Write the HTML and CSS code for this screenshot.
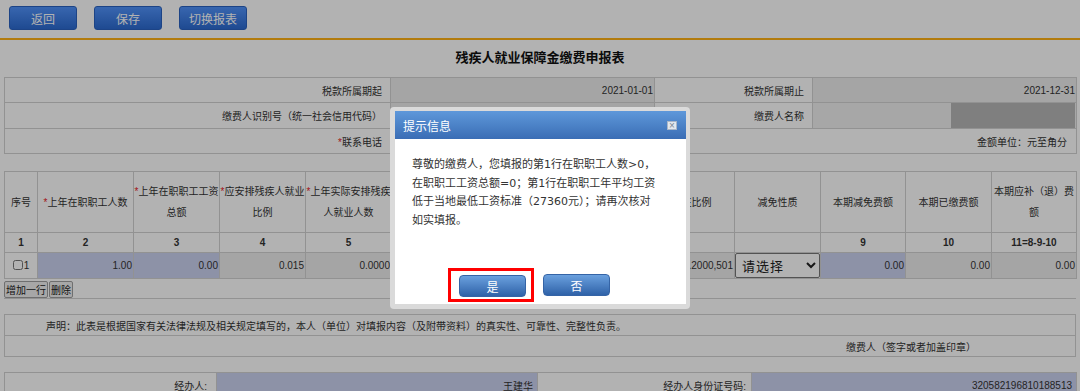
FILE: index.html
```html
<!DOCTYPE html>
<html lang="zh-CN">
<head>
    <meta charset="UTF-8">
    <title>残疾人就业保障金缴费申报表</title>
    <link rel="stylesheet" href="styles.css">
</head>
<body class="modal-open">

<div class="toolbar">
    <button class="tool-btn">返回</button>
    <button class="tool-btn">保存</button>
    <button class="tool-btn">切换报表</button>
</div>

<div class="form">
    <h1 class="title">残疾人就业保障金缴费申报表</h1>

    <table class="info">
        <colgroup>
            <col style="width:386px"><col style="width:264px"><col style="width:158px"><col style="width:264px">
        </colgroup>
        <tr>
            <td class="label">税款所属期起</td>
            <td class="value ro">2021-01-01</td>
            <td class="label">税款所属期止</td>
            <td class="value ro">2021-12-31</td>
        </tr>
        <tr>
            <td class="label">缴费人识别号（统一社会信用代码）</td>
            <td class="value ro"></td>
            <td class="label">缴费人名称</td>
            <td class="value name"><span class="mask"></span></td>
        </tr>
        <tr>
            <td class="label"><span class="req">*</span>联系电话</td>
            <td class="value in"></td>
            <td class="value unit" colspan="2">金额单位：元至角分</td>
        </tr>
    </table>

    <div class="detail">
        <table class="grid">
            <colgroup>
                <col style="width:33px"><col style="width:96px"><col style="width:86px"><col style="width:86px">
                <col style="width:86px"><col style="width:86px"><col style="width:86px"><col style="width:85px">
                <col style="width:86px"><col style="width:86px"><col style="width:85px"><col style="width:86px">
                <col style="width:85px">
            </colgroup>
            <tr class="head">
                <td>序号</td>
                <td><span class="req">*</span>上年在职职工人数</td>
                <td><span class="req">*</span>上年在职职工工资总额</td>
                <td><span class="req">*</span>应安排残疾人就业比例</td>
                <td><span class="req">*</span>上年实际安排残疾人就业人数</td>
                <td>上年在职职工年平均工资</td>
                <td>上年实际安排残疾人就业比例</td>
                <td>本期应纳费额</td>
                <td>减征比例</td>
                <td>减免性质</td>
                <td>本期减免费额</td>
                <td>本期已缴费额</td>
                <td>本期应补（退）费额</td>
            </tr>
            <tr class="nums">
                <td>1</td><td>2</td><td>3</td><td>4</td><td>5</td><td>6</td><td>7</td><td>8</td>
                <td></td><td></td><td>9</td><td>10</td><td>11=8-9-10</td>
            </tr>
            <tr class="data">
                <td class="seq"><input type="checkbox" class="chk">1</td>
                <td class="in">1.00</td>
                <td class="in">0.00</td>
                <td class="ro">0.015</td>
                <td class="ro">0.0000</td>
                <td class="ro">0.00</td>
                <td class="ro">0.0000</td>
                <td class="ro">0.00</td>
                <td class="ro clip">0.2000,501</td>
                <td class="sel">
                    <select class="picker">
                        <option>请选择</option>
                    </select>
                </td>
                <td class="in">0.00</td>
                <td class="ro">0.00</td>
                <td class="ro">0.00</td>
            </tr>
        </table>
        <div class="row-tools">
            <button class="small-btn">增加一行</button><button class="small-btn">删除</button>
        </div>
    </div>

    <table class="declare">
        <tr>
            <td class="stmt">声明：此表是根据国家有关法律法规及相关规定填写的，本人（单位）对填报内容（及附带资料）的真实性、可靠性、完整性负责。</td>
        </tr>
        <tr>
            <td class="sign">缴费人（签字或者加盖印章）</td>
        </tr>
    </table>

    <table class="agent">
        <colgroup>
            <col style="width:212px"><col style="width:321px"><col style="width:214px"><col style="width:325px">
        </colgroup>
        <tr>
            <td class="label">经办人:</td>
            <td class="value in">王建华</td>
            <td class="label tight">经办人身份证号码:</td>
            <td class="value in">320582196810188513</td>
        </tr>
    </table>
</div>

<div class="mask-layer">
    <div class="dialog">
        <div class="dialog-head">
            <span class="dialog-title">提示信息</span>
            <span class="dialog-close">×</span>
        </div>
        <div class="dialog-body">
            <p class="dialog-msg">尊敬的缴费人，您填报的第1行在职职工人数&gt;0，<br>在职职工工资总额=0；第1行在职职工年平均工资<br>低于当地最低工资标准（27360元）；请再次核对<br>如实填报。</p>
            <div class="dialog-btns">
                <span class="mark"><button class="dlg-btn">是</button></span>
                <button class="dlg-btn">否</button>
            </div>
        </div>
    </div>
</div>

</body>
</html>
```

FILE: styles.css
```css
body {
    margin: 0;
    font-family: "Liberation Sans", "Noto Sans CJK SC", sans-serif;
    font-size: 10px;
    color: #333;
    background: #fff;
}
.modal-open {
    overflow: hidden;
}
.toolbar {
    display: flex;
    gap: 17px;
    height: 40px;
    box-sizing: border-box;
    padding: 6px 0 0 9px;
    border-bottom: 2px solid #ffb014;
}
.tool-btn {
    width: 68px;
    height: 24px;
    padding: 0;
    font-family: "Noto Sans CJK SC", sans-serif;
    font-size: 12px;
    color: #fff;
    background: linear-gradient(#5193fb, #2c6ad0);
    border: 1px solid #2a62c0;
    border-radius: 3px;
}
.form {
    padding: 0 4px;
}
.title {
    margin: 0;
    padding: 7px 0 10px;
    font-family: "Noto Sans CJK SC", sans-serif;
    font-size: 13px;
    line-height: 20px;
    text-align: center;
    color: #111;
}
.req {
    color: #e8211e;
}
table {
    width: 100%;
    border-collapse: collapse;
    table-layout: fixed;
}
td {
    border: 1px solid #d2d2d2;
    padding: 0;
    white-space: nowrap;
    overflow: hidden;
}
.ro {
    background: #ededed;
}
.in {
    background: #cbd2f0;
}

/* header */
.info td {
    height: 24px;
    text-align: right;
}
.info .label {
    padding-right: 8px;
}
.info .value {
    padding-right: 1px;
}
.info .name {
    background: #f0f0f0;
}
.mask {
    display: block;
    width: 124px;
    height: 25px;
    margin-left: auto;
    background: #b7b7b7;
}
.info .unit {
    padding-right: 9px;
}

/* detail grid */
.detail {
    margin-top: 17px;
    border-bottom: 1px solid #d2d2d2;
}
.grid td {
    text-align: center;
}
.grid .head td {
    height: 60px;
    line-height: 21px;
    white-space: normal;
}
.grid .nums td {
    height: 19px;
    font-weight: bold;
}
.grid .data td {
    height: 25px;
    text-align: right;
    padding-right: 1px;
}
.grid .data .seq {
    text-align: center;
    padding: 0;
}
.chk {
    width: 10px;
    height: 10px;
    margin: 0 1px 0 0;
    vertical-align: -1px;
}
.grid .data .sel {
    padding: 0;
    background: #fff;
}
.picker {
    width: 100%;
    height: 25px;
    margin: 0;
    padding-left: 2px;
    font-family: "Noto Sans CJK SC", sans-serif;
    font-size: 13px;
    letter-spacing: 1px;
    color: #222;
    border: 1px solid #777;
    border-radius: 2px;
    background: #fff;
}
.row-tools {
    display: flex;
    height: 19px;
    padding-top: 2px;
    box-sizing: border-box;
}
.small-btn {
    height: 17px;
    padding: 0 1px;
    margin-right: 1px;
    font-family: "Noto Sans CJK SC", sans-serif;
    font-size: 10px;
    line-height: 15px;
    color: #222;
    background: #efefef;
    border: 1px solid #a0a0a0;
    border-radius: 2px;
}

/* declaration */
.declare {
    margin-top: 15px;
}
.declare td {
    height: 20px;
}
.declare .stmt {
    padding-left: 41px;
}
.declare .sign {
    text-align: right;
    padding-right: 99px;
}

/* agent */
.agent {
    margin-top: 15px;
}
.agent td {
    height: 24px;
    text-align: right;
}
.agent .label {
    padding-right: 9px;
}
.agent .tight {
    padding-right: 5px;
}
.agent .value {
    padding-right: 4px;
}

/* modal */
.mask-layer {
    position: fixed;
    top: 0;
    left: 0;
    right: 0;
    bottom: 0;
    display: flex;
    justify-content: center;
    align-items: flex-start;
    padding-top: 107px;
    background: rgba(0, 0, 0, 0.3);
}
.dialog {
    width: 300px;
    box-sizing: border-box;
    padding: 4px 4px 5px 5px;
    background: #dadada;
    border-radius: 4px;
}
.dialog-head {
    display: flex;
    align-items: center;
    justify-content: space-between;
    height: 28px;
    padding: 0 9px 0 8px;
    background: linear-gradient(#5e98da, #3a6db5);
}
.dialog-title {
    font-family: "Noto Sans CJK SC", sans-serif;
    font-size: 12px;
    color: #fff;
}
.dialog-close {
    width: 10px;
    height: 9px;
    box-sizing: border-box;
    font-size: 10px;
    line-height: 7px;
    text-align: center;
    color: #7d8895;
    background: #e3e8ee;
    border: 1px solid #a8b6c8;
}
.dialog-body {
    height: 165px;
    background: #fff;
}
.dialog-msg {
    margin: 0;
    padding: 17px 0 0 17px;
    font-family: "DejaVu Sans", "Noto Sans CJK SC", sans-serif;
    font-size: 11px;
    line-height: 18.5px;
    color: #333;
}
.dialog-btns {
    display: flex;
    align-items: center;
    gap: 9px;
    margin-top: 38px;
    padding-left: 53px;
}
.mark {
    display: flex;
    padding: 4px 5px 2px 8px;
    border: 3px solid #f00;
}
.dlg-btn {
    width: 67px;
    height: 22px;
    padding: 0;
    font-family: "Noto Sans CJK SC", sans-serif;
    font-size: 12px;
    color: #fff;
    background: linear-gradient(#6aa0de, #2f62a8);
    border: 1px solid #3564a6;
    border-radius: 4px;
}
```
